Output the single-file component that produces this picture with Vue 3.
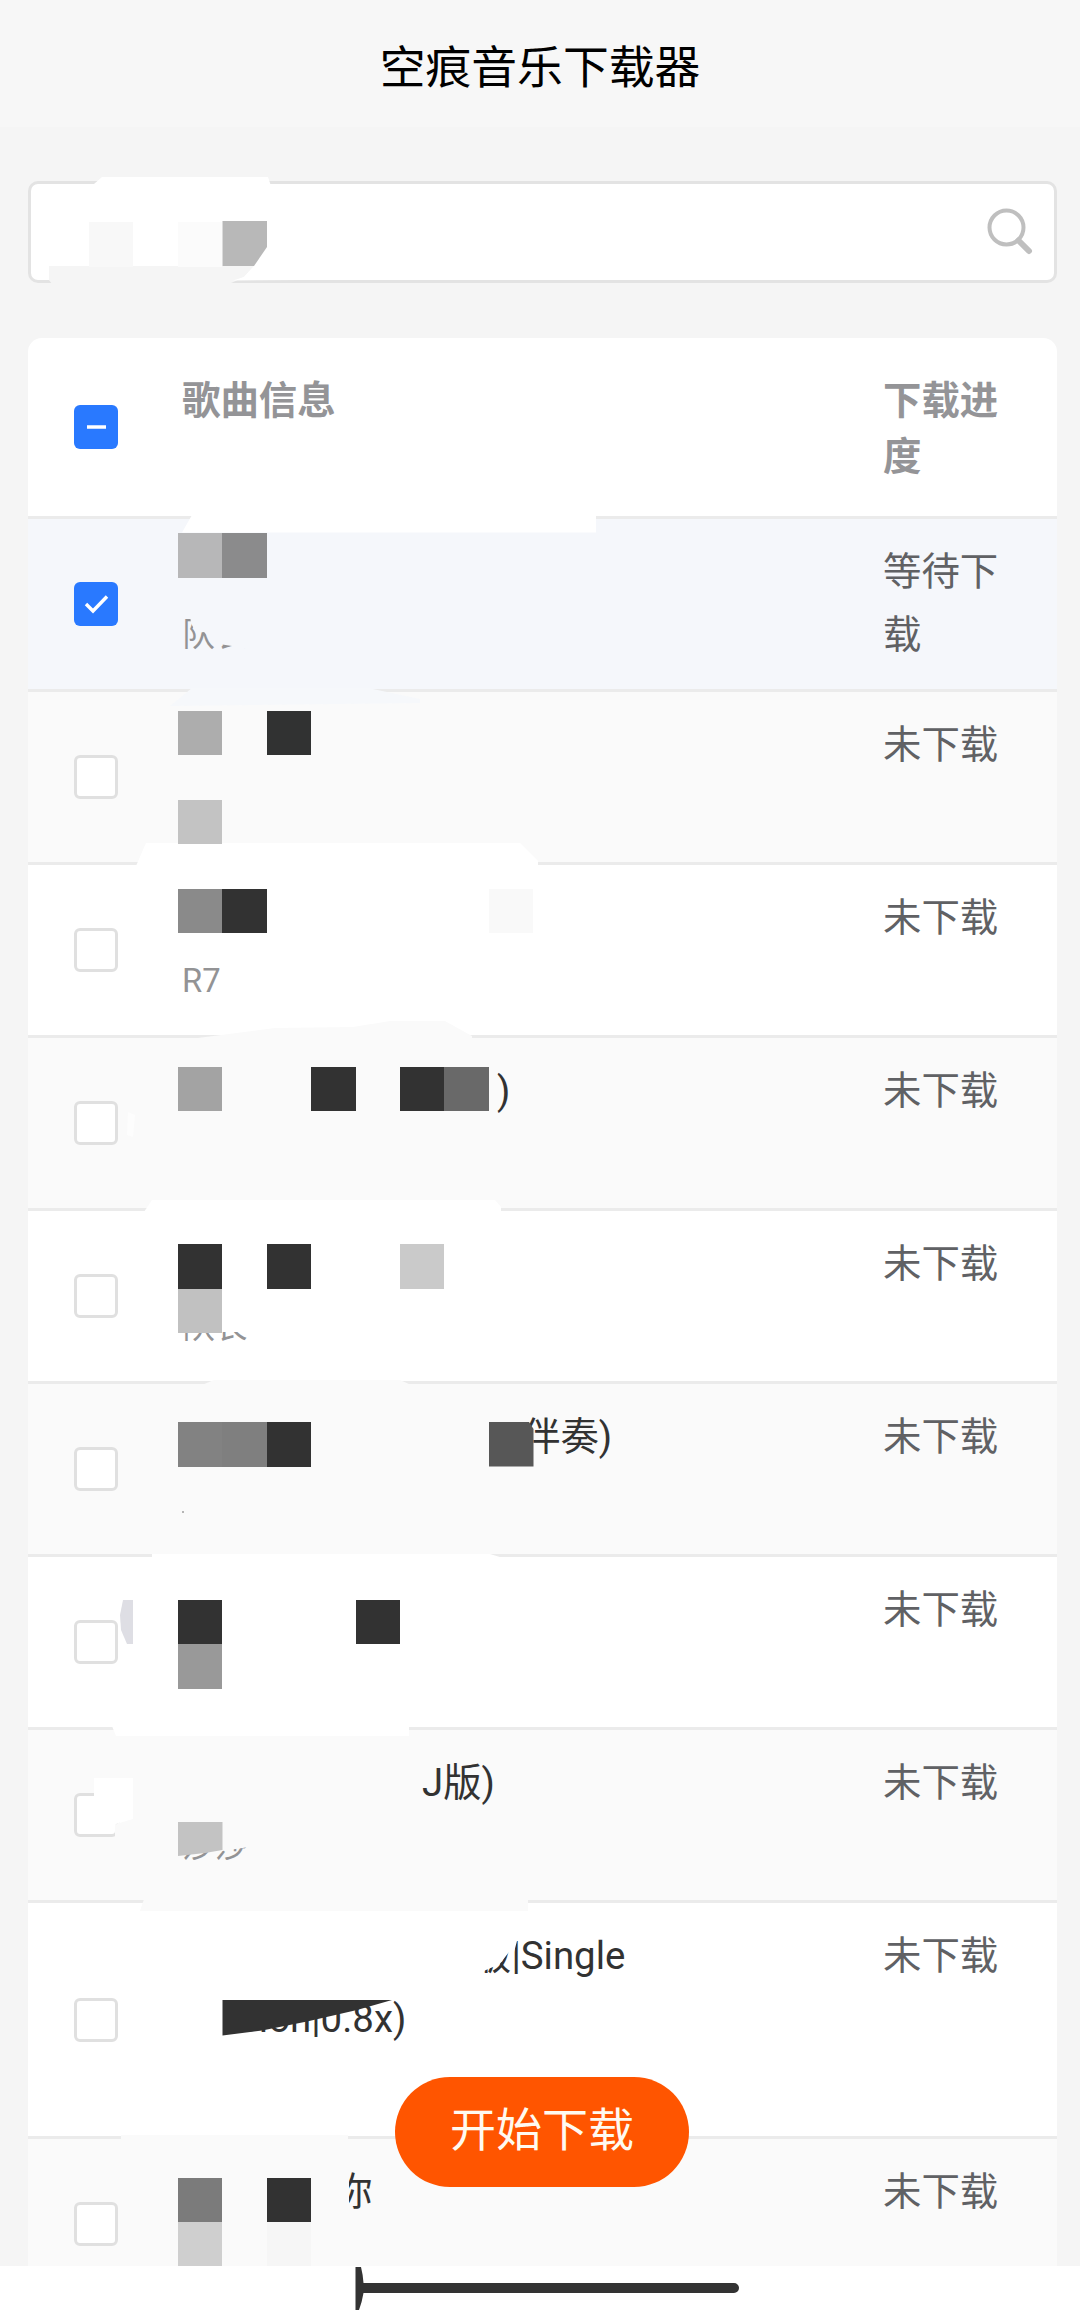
<template>
    <div class="page">
        <header class="page__header">
            <h1 class="page__title">空痕音乐下载器</h1>
        </header>

        <main class="page__body">
            <div class="search">
                <svg class="search__icon" viewBox="0 0 48 48">
                    <circle cx="20.5" cy="19.500" r="17" />
                    <path d="M32.5 32.500L43 43" />
                </svg>
            </div>

            <div class="table">
                <div class="table__row table__row--head">
                    <div class="table__check">
                        <span class="checkbox checkbox--on">
                            <svg class="checkbox__icon" viewBox="0 0 44 44"><path d="M13 22H32" /></svg>
                        </span>
                    </div>
                    <div class="table__info">歌曲信息</div>
                    <div class="table__status">下载进度</div>
                </div>

                <div
                    v-for="song in songs"
                    :key="song.id"
                    class="table__row"
                    :class="{ 'table__row--checked': song.checked, 'table__row--even': song.id % 2 === 0 }"
                    @click="toggle(song)"
                >
                    <div class="table__check">
                        <span class="checkbox" :class="{ 'checkbox--on': song.checked }">
                            <svg v-if="song.checked" class="checkbox__icon" viewBox="0 0 44 44">
                                <path d="M12 22L19 29L33 14.500" />
                            </svg>
                        </span>
                    </div>
                    <div class="table__info">
                        <p
                            v-for="(line, i) in song.lines"
                            :key="i"
                            class="table__name"
                            :style="{ paddingLeft: line.indent + 'px' }"
                        >{{ line.text }}</p>
                        <p class="table__singer">{{ song.singer }}</p>
                    </div>
                    <div class="table__status">{{ song.checked ? '等待下载' : '未下载' }}</div>
                </div>
            </div>
        </main>

        <!-- mosaic and eraser strokes over the song names -->
        <svg class="marks" viewBox="0 0 1080 2310">
            <polygon v-for="(s, i) in strokes" :key="'s' + i" :points="s.points" :fill="s.fill" />
            <rect
                v-for="(c, i) in cells"
                :key="'c' + i"
                :x="c[0] * CELL"
                :y="c[1] * CELL"
                :width="CELL"
                :height="CELL"
                :fill="c[2]"
                shape-rendering="crispEdges"
            />
            <polygon v-for="(s, i) in shapes" :key="'p' + i" :points="s.points" :fill="s.fill" />
        </svg>

        <button class="start">开始下载</button>

        <footer class="page__nav">
            <svg class="page__nav-bar" viewBox="0 0 1080 44">
                <path d="M355.500 1H361Q363 9 363.500 17H734A5 5 0 0 1 734 27H363.500Q362 36 359 44H355.500Z" />
            </svg>
        </footer>
    </div>
</template>

<script setup>
import { ref } from 'vue';

const CELL = 44.44;

const songs = ref([
    { id: 1, checked: true, lines: [{ text: '', indent: 0 }], singer: '队长' },
    { id: 2, checked: false, lines: [{ text: '', indent: 0 }], singer: '' },
    { id: 3, checked: false, lines: [{ text: '', indent: 0 }], singer: 'R7' },
    { id: 4, checked: false, lines: [{ text: ')', indent: 315 }], singer: '' },
    { id: 5, checked: false, lines: [{ text: '', indent: 0 }], singer: '队长' },
    { id: 6, checked: false, lines: [{ text: '伴奏)', indent: 340 }], singer: '' },
    { id: 7, checked: false, lines: [{ text: '', indent: 0 }], singer: '' },
    { id: 8, checked: false, lines: [{ text: 'J版)', indent: 240 }], singer: '莎莎' },
    {
        id: 9,
        checked: false,
        lines: [{ text: '版|Single', indent: 291 }, { text: 'Version|0.8x)', indent: 0 }],
        singer: '',
    },
    { id: 10, checked: false, lines: [{ text: '你', indent: 152 }], singer: '' },
]);

const toggle = (song) => {
    song.checked = !song.checked;
};

// eraser strokes, drawn under the mosaic
const strokes = [
    // search field
    { points: '94,184 102,177 268,177 271,186 94,186', fill: '#fff' },
    { points: '49,266 254,266 244,277 229,284 52,284 49,280', fill: '#f5f5f5' },
    { points: '254,266 244,277 233,280.500 300,280 300,266', fill: '#fff' },
    // row borders
    { points: '192,515 596,515 596,532.500 182,532.500', fill: '#fff' },
    { points: '192,688 368,688 420,699 420,703 170,706', fill: '#f6f8fb' },
    { points: '136,866 146,843 520,843 538,861 538,866', fill: '#fff' },
    { points: '190,1039 275,1028 353,1027 390,1021 445,1021 472,1036 472,1039', fill: '#fafafa' },
    { points: '144,1212 152,1200 495,1200 501,1207 501,1212', fill: '#fff' },
    { points: '202,1385 214,1380 400,1380 411,1385', fill: '#fafafa' },
    { points: '152,1558 152,1554 490,1554 503,1558', fill: '#fff' },
    { points: '112,1726 409,1726 409,1736 116,1736', fill: '#fff' },
    { points: '144,1899 528,1899 528,1911 140,1911', fill: '#fafafa' },
    { points: '121,2135 348,2135 348,2140 121,2140', fill: '#fafafa' },
    // around the checkboxes
    { points: '128,1112 135,1115 133,1137 127,1135', fill: '#fdfdfd' },
    { points: '94,1778 133,1778 133,1819 116,1824 112,1834 94,1834', fill: '#fff' },
    { points: '115,1825 120,1822 120,1838 115,1838', fill: '#fafafa' },
    { points: '123,1600 133,1600 133,1644 127,1644 121,1630 120,1615', fill: '#dedee4' },
    // names and singers
    { points: '190,615 191,623 196,633 204,632 213,641 219,653 219,644 232,646 240,649 251,648 251,615', fill: '#f5f7fb' },
    { points: '222,1300 256,1300 256,1332 222,1332', fill: '#fff' },
    { points: '178,1815 256,1815 256,1846 222,1851 178,1854', fill: '#fafafa' },
    { points: '518,1412 529,1412 529,1423 518,1423', fill: '#fafafa' },
    // leaves the foot of the last stroke of 版 visible
    { points: '470,1932 517,1932 517,1941 514,1952 509,1952 499,1965 493,1967 486,1970 470,1978', fill: '#fff' },
    { points: '176,1990 223,1990 223,2035 257,2031 257,2046 176,2046', fill: '#fff' },
    { points: '330,2165 349,2165 349,2222 330,2222', fill: '#fafafa' },
];

// mosaic: column, row, colour
const cells = [
    [2, 5, '#f8f8f8'], [4, 5, '#fbfbfb'],
    [4, 12, '#b7b7b8'], [5, 12, '#8b8b8c'],
    [4, 16, '#adadad'], [6, 16, '#313232'], [4, 18, '#c3c3c3'],
    [4, 20, '#8a8a8a'], [5, 20, '#323232'], [11, 20, '#f9f9f9'],
    [4, 24, '#a3a3a3'], [7, 24, '#323232'], [9, 24, '#323232'], [10, 24, '#696969'],
    [4, 28, '#323232'], [6, 28, '#323232'], [9, 28, '#cacaca'], [4, 29, '#c1c1c1'],
    [4, 32, '#828282'], [5, 32, '#7f7f7f'], [6, 32, '#323232'],
    [4, 36, '#323232'], [8, 36, '#323232'], [4, 37, '#999'],
    [4, 49, '#7b7b7b'], [6, 49, '#323232'], [4, 50, '#cfcfcf'], [6, 50, '#f6f6f6'],
];

// mosaic pieces with a cut edge
const shapes = [
    { points: '222.500,221 267,221 267,247 254,266 222.500,266', fill: '#b8b8b8' },
    { points: '489,1422 529,1422 533.500,1429 533.500,1466.500 489,1466.500', fill: '#575757' },
    { points: '178,1822 222.500,1822 222.500,1850 205,1853 178,1856', fill: '#c3c3c3' },
    { points: '222.500,2000 392,2000 357,2010 307,2021.500 262,2030.500 222.500,2035.500', fill: '#323232' },
    { points: '182,1511 184,1511 184,1513 182,1513', fill: '#b5b5b5' },
];
</script>

<style>
body {
    margin: 0;
    background-color: #f5f5f5;
}
</style>

<style scoped>
.page {
    position: relative;
    display: flex;
    flex-direction: column;
    width: 1080px;
    height: 2310px;
    overflow: hidden;
    background-color: #f5f5f5;
    font-family: Roboto, "Noto Sans CJK SC", sans-serif;
}

.page__header {
    flex: none;
    display: flex;
    align-items: center;
    justify-content: center;
    height: 127px;
    background-color: #f7f7f7;
}

.page__title {
    margin: 11px 0 0;
    font-size: 45.8px;
    line-height: 60px;
    font-weight: 400;
    color: #000;
}

.page__body {
    flex: 1;
    min-height: 0;
    padding: 54px 23px 0 28px;
    overflow: hidden;
}

.search {
    display: flex;
    align-items: center;
    justify-content: flex-end;
    box-sizing: border-box;
    height: 102px;
    padding-right: 20px;
    margin-bottom: 55px;
    border: 3px solid #e3e3e3;
    border-radius: 10px;
    background-color: #fff;
}

.search__icon {
    width: 48px;
    height: 48px;
    fill: none;
    stroke: #bfbfbf;
    stroke-width: 4;
    stroke-linecap: round;
}

.search__icon path {
    stroke-width: 6;
}

.table {
    border-radius: 14px 14px 0 0;
    overflow: hidden;
    background-color: #fff;
}

.table__row {
    display: flex;
    box-sizing: border-box;
    min-height: 173px;
    padding: 21px 0 23px;
    border-bottom: 3px solid #ebebeb;
    font-size: 38.4px;
    line-height: 63px;
    color: #606164;
}

.table__row--even {
    background-color: #fafafa;
}

.table__row--checked {
    background-color: #f5f7fb;
}

.table__row--head {
    min-height: 181px;
    padding: 35px 0 31px;
    line-height: 56px;
    font-weight: 700;
    color: #949497;
}

.table__check {
    display: flex;
    align-items: center;
    width: 154px;
    padding-left: 46px;
    box-sizing: border-box;
    margin: -21px 0 -23px;
}

.table__row--head .table__check {
    margin: -35px 0 -31px;
}

.table__info {
    width: 701px;
}

.table__name {
    min-height: 63px;
    margin: 0;
    font-size: 38.4px;
    color: #323232;
    white-space: nowrap;
}

.table__singer {
    min-height: 63px;
    margin: 1px 0 -1px;
    font-size: 32.800px;
    color: #939395;
}

.table__status {
    width: 130px;
}

.checkbox {
    display: block;
    box-sizing: border-box;
    width: 44px;
    height: 44px;
    border: 3px solid #e0e0e0;
    border-radius: 6px;
    background-color: #fff;
}

.checkbox--on {
    border: none;
    background-color: #2979ff;
}

.checkbox__icon {
    display: block;
    width: 44px;
    height: 44px;
    fill: none;
    stroke: #fff;
    stroke-width: 3.4;
}

.marks {
    position: absolute;
    top: 0;
    left: 0;
    width: 1080px;
    height: 2310px;
    pointer-events: none;
}

.start {
    position: absolute;
    left: 395px;
    bottom: 123px;
    width: 294px;
    height: 110px;
    padding: 0 0 12px;
    border: none;
    border-radius: 55px;
    background-color: #ff5500;
    color: #fffaf0;
    font-family: inherit;
    font-size: 46px;
}

.page__nav {
    position: relative;
    flex: none;
    height: 44px;
    background-color: #fff;
}

.page__nav-bar {
    display: block;
    width: 1080px;
    height: 44px;
    fill: #333;
}
</style>
